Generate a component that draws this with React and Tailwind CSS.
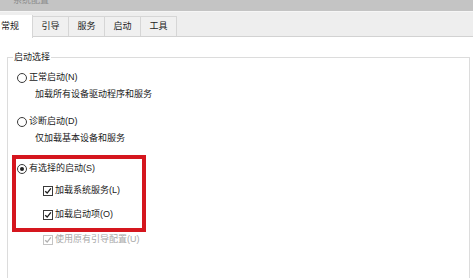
import React from 'react';

const font = "font-['Liberation_Sans','Noto_Sans_CJK_SC',sans-serif]";

const Radio = ({ checked }) => (
  <span className="w-[10px] h-[10px] rounded-full border border-[#3a3a3a] bg-white flex items-center justify-center shrink-0">
    {checked && <span className="w-[4px] h-[4px] rounded-full bg-[#222]" />}
  </span>
);

const Check = ({ disabled }) => (
  <span
    className={`w-[10px] h-[10px] border flex items-center justify-center shrink-0 bg-white ${
      disabled ? 'border-[#c4c4c4]' : 'border-[#3a3a3a]'
    }`}
  >
    <svg viewBox="0 0 10 10" className="w-[8px] h-[8px]">
      <path
        d="M1.5 5.2 L4 7.6 L8.6 1.8"
        fill="none"
        stroke={disabled ? '#b0b0b0' : '#1e1e1e'}
        strokeWidth="1.7"
      />
    </svg>
  </span>
);

const tabs = ['引导', '服务', '启动', '工具'];

export default function App() {
  return (
    <div className={`w-[473px] h-[278px] bg-white overflow-hidden text-[9px] text-[#222] ${font}`}>
      {/* title bar */}
      <div className="h-[11px] bg-[#c4c4c4] overflow-hidden">
        <div className="ml-[13px] -mt-[6px] text-[#8d8d8d] leading-[12px]">系统配置</div>
      </div>

      {/* tab strip */}
      <div className="h-[26px] bg-[#eeeeee] border-t border-[#f6f6f6] border-b border-b-[#d2d2d2] flex items-end">
        <div className="h-[23px] w-[33px] bg-white border-r border-[#d6d6d6] -mb-[2px] relative z-10 flex items-center pl-[1px] leading-none">
          常规
        </div>
        {tabs.map((t) => (
          <div
            key={t}
            className="h-[20px] w-[36px] border-t border-r border-[#d6d6d6] bg-[#f0f0f0] flex items-center justify-center leading-none"
          >
            {t}
          </div>
        ))}
      </div>

      {/* group box */}
      <div className="mt-[20px] ml-[7px] w-[463px] h-[260px] border border-b-0 border-[#dcdcdc] relative">
        <div className="absolute left-[5px] -top-[7px] bg-white px-[1px] leading-[12px]">启动选择</div>

        <div className="mt-[13px] pl-[9px] h-[14px] flex items-center gap-[2px]">
          <Radio />
          <span>正常启动(N)</span>
        </div>
        <div className="mt-[3px] pl-[27px] h-[14px] flex items-center">加载所有设备驱动程序和服务</div>

        <div className="mt-[13px] pl-[9px] h-[14px] flex items-center gap-[2px]">
          <Radio />
          <span>诊断启动(D)</span>
        </div>
        <div className="mt-[3px] pl-[27px] h-[14px] flex items-center">仅加载基本设备和服务</div>

        <div className="mt-[9px] ml-[4px] w-[134px] border-[4px] border-[#d5161e] pt-[3px] pb-[6px]">
          <div className="pl-[1px] h-[14px] flex items-center gap-[2px]">
            <Radio checked />
            <span>有选择的启动(S)</span>
          </div>
          <div className="mt-[8px] pl-[27px] h-[14px] flex items-center gap-[2px]">
            <Check />
            <span>加载系统服务(L)</span>
          </div>
          <div className="mt-[10px] pl-[27px] h-[14px] flex items-center gap-[2px]">
            <Check />
            <span>加载启动项(O)</span>
          </div>
        </div>

        <div className="mt-[1px] pl-[35px] h-[14px] flex items-center gap-[2px] text-[#a8a8a8]">
          <Check disabled />
          <span>使用原有引导配置(U)</span>
        </div>
      </div>
    </div>
  );
}
